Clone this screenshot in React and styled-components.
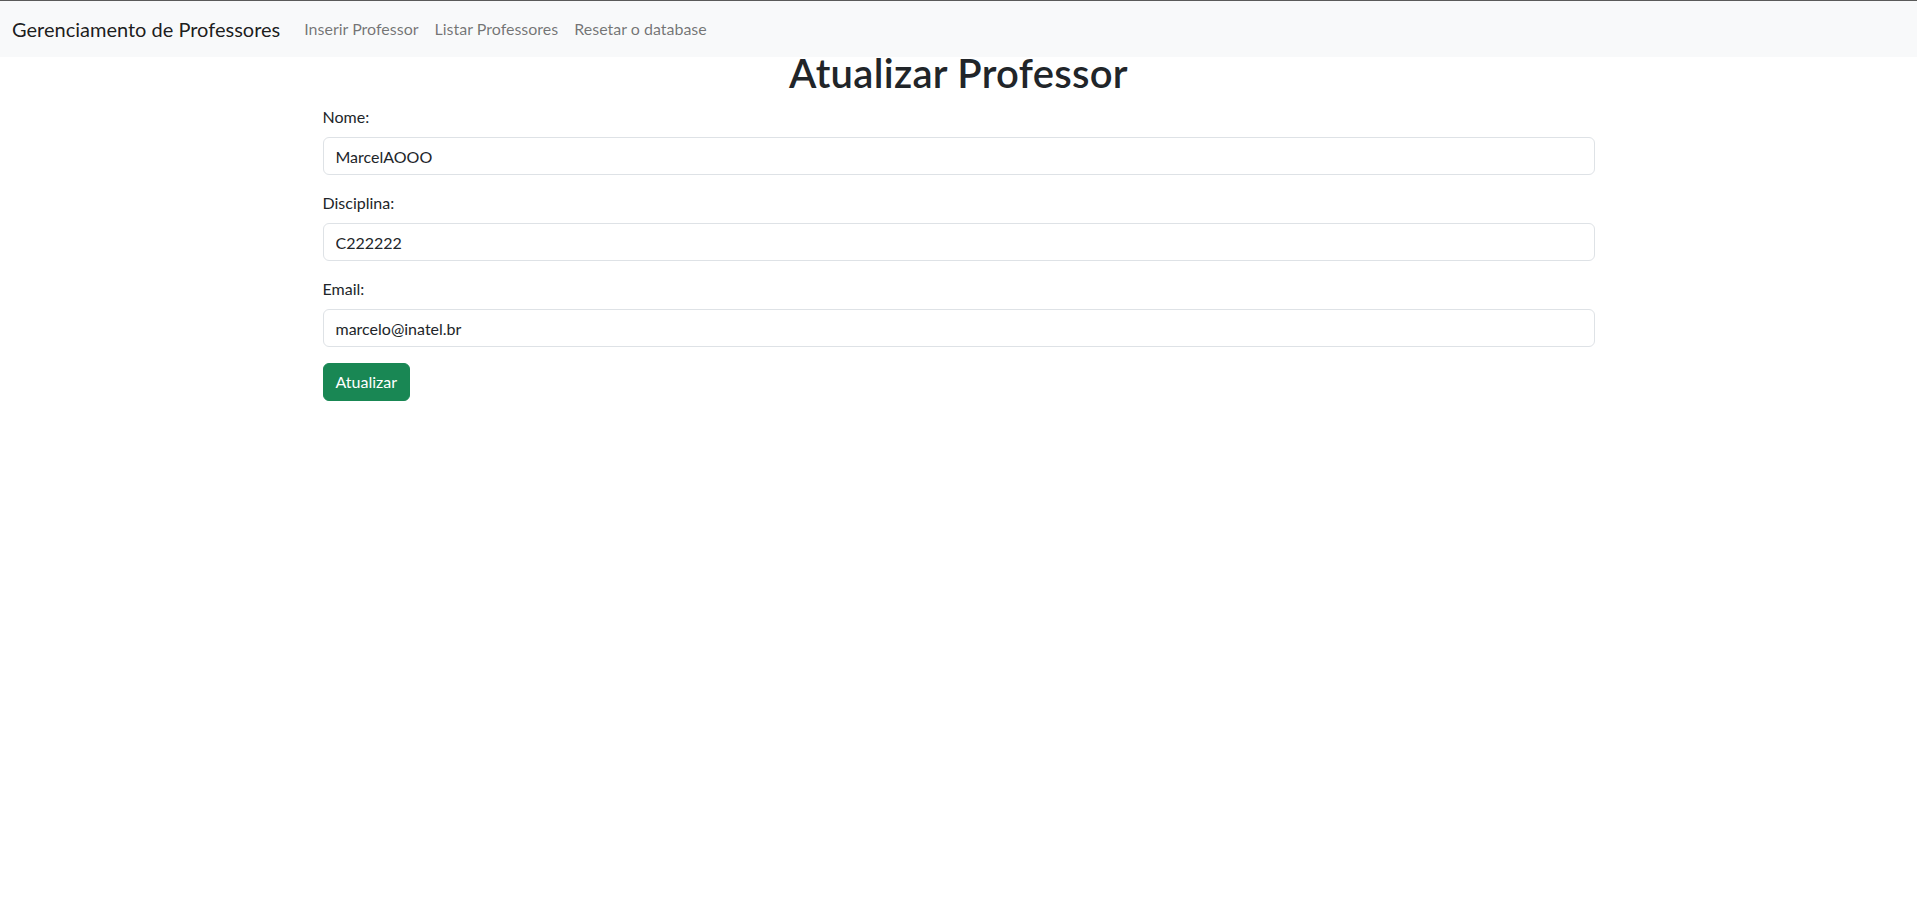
import React from "react";
import styled, { createGlobalStyle } from "styled-components";

const GlobalStyle = createGlobalStyle`
  * { box-sizing: border-box; }
  body {
    margin: 0;
    background: #fff;
    color: #212529;
    font-family: Lato, "Noto Sans", "Liberation Sans", sans-serif;
    font-size: 16px;
    line-height: 1.5;
  }
`;

const Navbar = styled.nav`
  display: flex;
  align-items: center;
  height: 57px;
  padding: 8px 12px;
  border-top: 1px solid #5a5a5a;
  background-color: #f8f9fa;
`;

const Brand = styled.a`
  font-size: 20px;
  line-height: 30px;
  padding: 5px 0;
  margin-right: 16px;
  color: rgba(0, 0, 0, 0.9);
  text-decoration: none;
  cursor: pointer;
`;

const NavList = styled.div`
  display: flex;
`;

const NavLink = styled.a`
  padding: 8px;
  color: rgba(0, 0, 0, 0.55);
  text-decoration: none;
  cursor: pointer;
`;

const Container = styled.main`
  width: 100%;
  max-width: 1272px;
  margin: 0 auto;
`;

const Title = styled.h1`
  margin: -8px 0 8px;
  font-size: 40px;
  font-weight: 600;
  line-height: 1.2;
  letter-spacing: 0.3px;
  text-align: center;
`;

const Field = styled.div`
  margin-bottom: 16px;
`;

const Label = styled.label`
  display: block;
  margin-bottom: 8px;
`;

const Input = styled.input`
  display: block;
  width: 100%;
  height: 38px;
  padding: 6px 12px;
  font: inherit;
  color: #212529;
  background-color: #fff;
  border: 1px solid #dee2e6;
  border-radius: 6px;
  outline: none;
`;

const Button = styled.button`
  height: 38px;
  padding: 6px 12px;
  font: inherit;
  color: #fff;
  background-color: #198754;
  border: 1px solid #198754;
  border-radius: 6px;
  cursor: pointer;
`;

const fields = [
  { id: "nome", label: "Nome:", value: "MarcelAOOO" },
  { id: "disciplina", label: "Disciplina:", value: "C222222" },
  { id: "email", label: "Email:", value: "marcelo@inatel.br" },
];

const App = () => {
  return (
    <>
      <GlobalStyle />
      <Navbar>
        <Brand>Gerenciamento de Professores</Brand>
        <NavList>
          <NavLink>Inserir Professor</NavLink>
          <NavLink>Listar Professores</NavLink>
          <NavLink>Resetar o database</NavLink>
        </NavList>
      </Navbar>
      <Container>
        <Title>Atualizar Professor</Title>
        <form onSubmit={(e) => e.preventDefault()}>
          {fields.map((item) => (
            <Field key={item.id}>
              <Label htmlFor={item.id}>{item.label}</Label>
              <Input id={item.id} type="text" defaultValue={item.value} />
            </Field>
          ))}
          <Button type="submit">Atualizar</Button>
        </form>
      </Container>
    </>
  );
};

export default App;
